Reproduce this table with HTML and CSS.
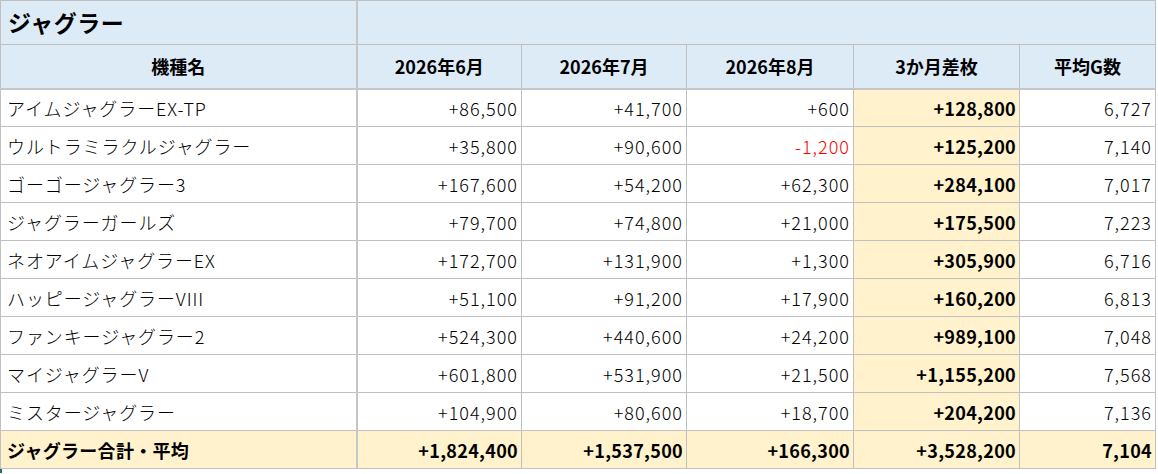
FILE: index.html
```html
<!DOCTYPE html>
<html lang="ja">
<head>
<meta charset="utf-8">
<title>ジャグラー</title>
<link rel="stylesheet" href="styles.css">
</head>
<body>
<div class="sheet">
  <table class="grid">
    <colgroup>
      <col class="c-name">
      <col class="c-m">
      <col class="c-m">
      <col class="c-m8">
      <col class="c-sum">
      <col class="c-avg">
    </colgroup>
    <tr class="title-row">
      <td class="title">ジャグラー</td>
      <td class="title-fill" colspan="5"></td>
    </tr>
    <tr class="head-row">
      <th class="name">機種名</th>
      <th>2026年6月</th>
      <th>2026年7月</th>
      <th>2026年8月</th>
      <th>3か月差枚</th>
      <th>平均G数</th>
    </tr>
    <tr class="data-row"><td class="name">アイムジャグラーEX-TP</td><td class="num">+86,500</td><td class="num">+41,700</td><td class="num">+600</td><td class="num sum">+128,800</td><td class="num">6,727</td></tr>
    <tr class="data-row"><td class="name">ウルトラミラクルジャグラー</td><td class="num">+35,800</td><td class="num">+90,600</td><td class="num neg">-1,200</td><td class="num sum">+125,200</td><td class="num">7,140</td></tr>
    <tr class="data-row"><td class="name">ゴーゴージャグラー3</td><td class="num">+167,600</td><td class="num">+54,200</td><td class="num">+62,300</td><td class="num sum">+284,100</td><td class="num">7,017</td></tr>
    <tr class="data-row"><td class="name">ジャグラーガールズ</td><td class="num">+79,700</td><td class="num">+74,800</td><td class="num">+21,000</td><td class="num sum">+175,500</td><td class="num">7,223</td></tr>
    <tr class="data-row"><td class="name">ネオアイムジャグラーEX</td><td class="num">+172,700</td><td class="num">+131,900</td><td class="num">+1,300</td><td class="num sum">+305,900</td><td class="num">6,716</td></tr>
    <tr class="data-row"><td class="name">ハッピージャグラーVIII</td><td class="num">+51,100</td><td class="num">+91,200</td><td class="num">+17,900</td><td class="num sum">+160,200</td><td class="num">6,813</td></tr>
    <tr class="data-row"><td class="name">ファンキージャグラー2</td><td class="num">+524,300</td><td class="num">+440,600</td><td class="num">+24,200</td><td class="num sum">+989,100</td><td class="num">7,048</td></tr>
    <tr class="data-row"><td class="name">マイジャグラーV</td><td class="num">+601,800</td><td class="num">+531,900</td><td class="num">+21,500</td><td class="num sum">+1,155,200</td><td class="num">7,568</td></tr>
    <tr class="data-row"><td class="name">ミスタージャグラー</td><td class="num">+104,900</td><td class="num">+80,600</td><td class="num">+18,700</td><td class="num sum">+204,200</td><td class="num">7,136</td></tr>
    <tr class="data-row total-row"><td class="name">ジャグラー合計・平均</td><td class="num">+1,824,400</td><td class="num">+1,537,500</td><td class="num">+166,300</td><td class="num">+3,528,200</td><td class="num">7,104</td></tr>
  </table>
  <div class="after"><span class="sel-mark"></span></div>
</div>
</body>
</html>
```
FILE: styles.css
```css
html, body {
  margin: 0;
  padding: 0;
  background: #ffffff;
}

body {
  font-family: "Noto Sans CJK JP", "Noto Sans", sans-serif;
  color: #000000;
  width: 1158px;
  height: 474px;
  overflow: hidden;
}

.sheet {
  width: 1158px;
}

.grid {
  border-collapse: collapse;
  table-layout: fixed;
  width: 1155px;
  border-top: 1px solid #d6d6d6;
}

.c-name { width: 356px; }
.c-m { width: 165px; }
.c-m8 { width: 167px; }
.c-sum { width: 166px; }
.c-avg { width: 136px; }

.grid td,
.grid th {
  border: 1px solid #c0c0c0;
  padding: 0;
  font-size: 18px;
  font-weight: 300;
  line-height: 1;
  white-space: nowrap;
  overflow: hidden;
  vertical-align: middle;
}

.grid .name {
  border-right: 2px solid #c6c6c6;
}

.grid .title-row {
  height: 44px;
}

.title-row td {
  background: #ddebf7;
}

.grid .title {
  font-size: 23px;
  font-weight: 700;
  padding-left: 7px;
  letter-spacing: 0.5px;
  border-right: 2px solid #c6c6c6;
}

.grid .head-row {
  height: 44px;
}

.grid .head-row th {
  background: #ddebf7;
  font-weight: 700;
  text-align: center;
  border-bottom: 2px solid #c6c6c6;
}

.grid .data-row {
  height: 38px;
}

.grid td.name {
  padding-left: 6px;
  text-align: left;
  letter-spacing: 0.9px;
}

.grid td.num {
  text-align: right;
  padding-right: 3px;
  letter-spacing: 1px;
}

.grid td.sum {
  background: #fff2cc;
  font-weight: 700;
  letter-spacing: 0.3px;
}

.grid td.neg {
  color: #ff0000;
}

.grid .total-row td {
  background: #fff2cc;
  font-weight: 700;
}

.grid .total-row td.name {
  letter-spacing: 0.3px;
}

.grid .total-row td.num {
  letter-spacing: 0.3px;
}

.after {
  height: 4px;
  display: flex;
}

.sel-mark {
  width: 2px;
  height: 4px;
  background: #217346;
}
```
